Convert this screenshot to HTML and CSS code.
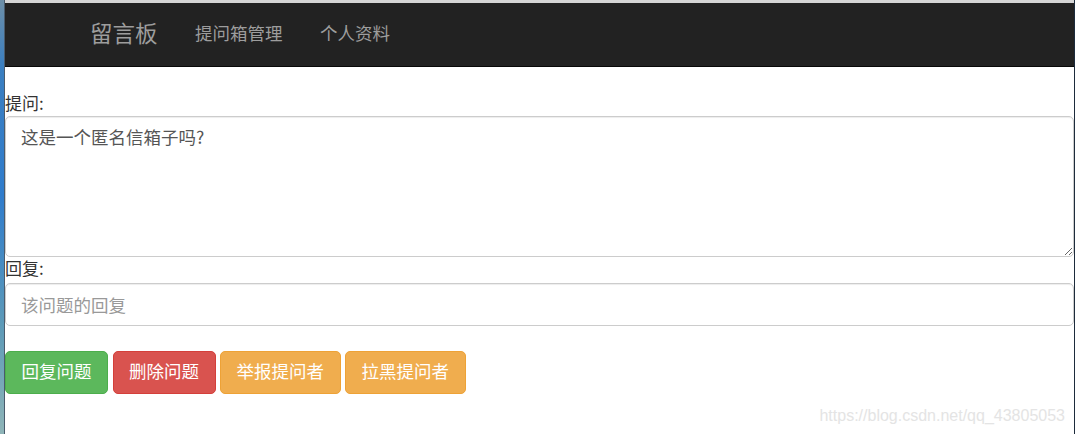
FILE: index.html
```html
<!DOCTYPE html>
<html lang="zh-CN">
<head>
<meta charset="utf-8">
<title>留言板</title>
<link rel="stylesheet" href="styles.css">
</head>
<body>
<div class="desk-left"></div>
<div class="window">
  <div class="title-gap"></div>
  <nav class="navbar">
    <div class="container">
      <a class="brand" href="#">留言板</a>
      <a class="nav-link" href="#">提问箱管理</a>
      <a class="nav-link" href="#">个人资料</a>
    </div>
  </nav>
  <form class="form">
    <label class="label">提问:</label>
    <textarea class="control textarea">这是一个匿名信箱子吗?</textarea>
    <label class="label label-second">回复:</label>
    <input class="control input" type="text" placeholder="该问题的回复">
    <div class="buttons">
      <button type="button" class="btn btn-success">回复问题</button>
      <button type="button" class="btn btn-danger">删除问题</button>
      <button type="button" class="btn btn-warning">举报提问者</button>
      <button type="button" class="btn btn-warning">拉黑提问者</button>
    </div>
  </form>
  <div class="watermark">https://blog.csdn.net/qq_43805053</div>
</div>
<div class="desk-right"></div>
</body>
</html>
```

FILE: styles.css
```css
html, body {
  margin: 0;
  padding: 0;
  height: 434px;
  overflow: hidden;
  background: #fff;
}

body {
  display: flex;
  font-family: "Noto Sans CJK SC", "Liberation Sans", sans-serif;
  font-size: 17.5px;
  color: #333;
}

.desk-left {
  width: 4px;
  flex: none;
  background: linear-gradient(to bottom, #6d8fa8 0%, #3b7fc0 15%, #2f7ccc 45%, #5d9ab8 75%, #8fb5b8 100%);
  border-right: 1px solid #4a5b6c;
}

.desk-right {
  width: 1px;
  flex: none;
  background: #1d2b3b;
}

.window {
  flex: 1;
  position: relative;
  display: flex;
  flex-direction: column;
  min-width: 0;
}

.title-gap {
  height: 3px;
  background: #d6d6d6;
}

.navbar {
  height: 63px;
  background: #222;
  border-bottom: 1px solid #080808;
  margin-bottom: 25px;
}

.container {
  box-sizing: border-box;
  height: 100%;
  display: flex;
  align-items: center;
  padding-left: 85px;
  padding-bottom: 5px;
}

.brand {
  color: #9d9d9d;
  font-size: 22.5px;
  text-decoration: none;
  padding-right: 37.5px;
}

.nav-link {
  color: #9d9d9d;
  font-size: 17.5px;
  text-decoration: none;
  margin-right: 37.5px;
}

.form {
  display: flex;
  flex-direction: column;
  align-items: stretch;
}

.label {
  height: 24px;
  line-height: 21px;
  font-size: 17px;
  color: #333;
}

.label-second {
  height: 26px;
}

.control {
  box-sizing: border-box;
  width: 100%;
  margin: 0;
  border: 1px solid #ccc;
  border-radius: 5px;
  box-shadow: inset 0 1px 1px rgba(0, 0, 0, .075);
  font-family: "Noto Sans CJK SC", sans-serif;
  font-size: 17.5px;
  color: #555;
  padding: 7px 15px;
  background: #fff;
  outline: none;
}

.textarea {
  height: 141px;
  line-height: 25px;
  resize: vertical;
  display: block;
}

.input {
  height: 43px;
  line-height: 25px;
}

.input::placeholder {
  color: #999;
}

.buttons {
  margin-top: 25px;
  display: flex;
  gap: 4.5px;
}

.btn {
  height: 43px;
  box-sizing: border-box;
  padding: 0 15.5px 3px;
  border: 1px solid transparent;
  border-radius: 5px;
  font-family: "Noto Sans CJK SC", sans-serif;
  font-size: 17.5px;
  color: #fff;
  line-height: 1;
  cursor: pointer;
}

.btn-success {
  background: #5cb85c;
  border-color: #4cae4c;
}

.btn-danger {
  background: #d9534f;
  border-color: #d43f3a;
}

.btn-warning {
  background: #f0ad4e;
  border-color: #eea236;
}

.watermark {
  position: absolute;
  right: 9px;
  bottom: 9px;
  font-family: "Liberation Sans", Arial, sans-serif;
  font-size: 16px;
  color: #e4e4e4;
}
```
